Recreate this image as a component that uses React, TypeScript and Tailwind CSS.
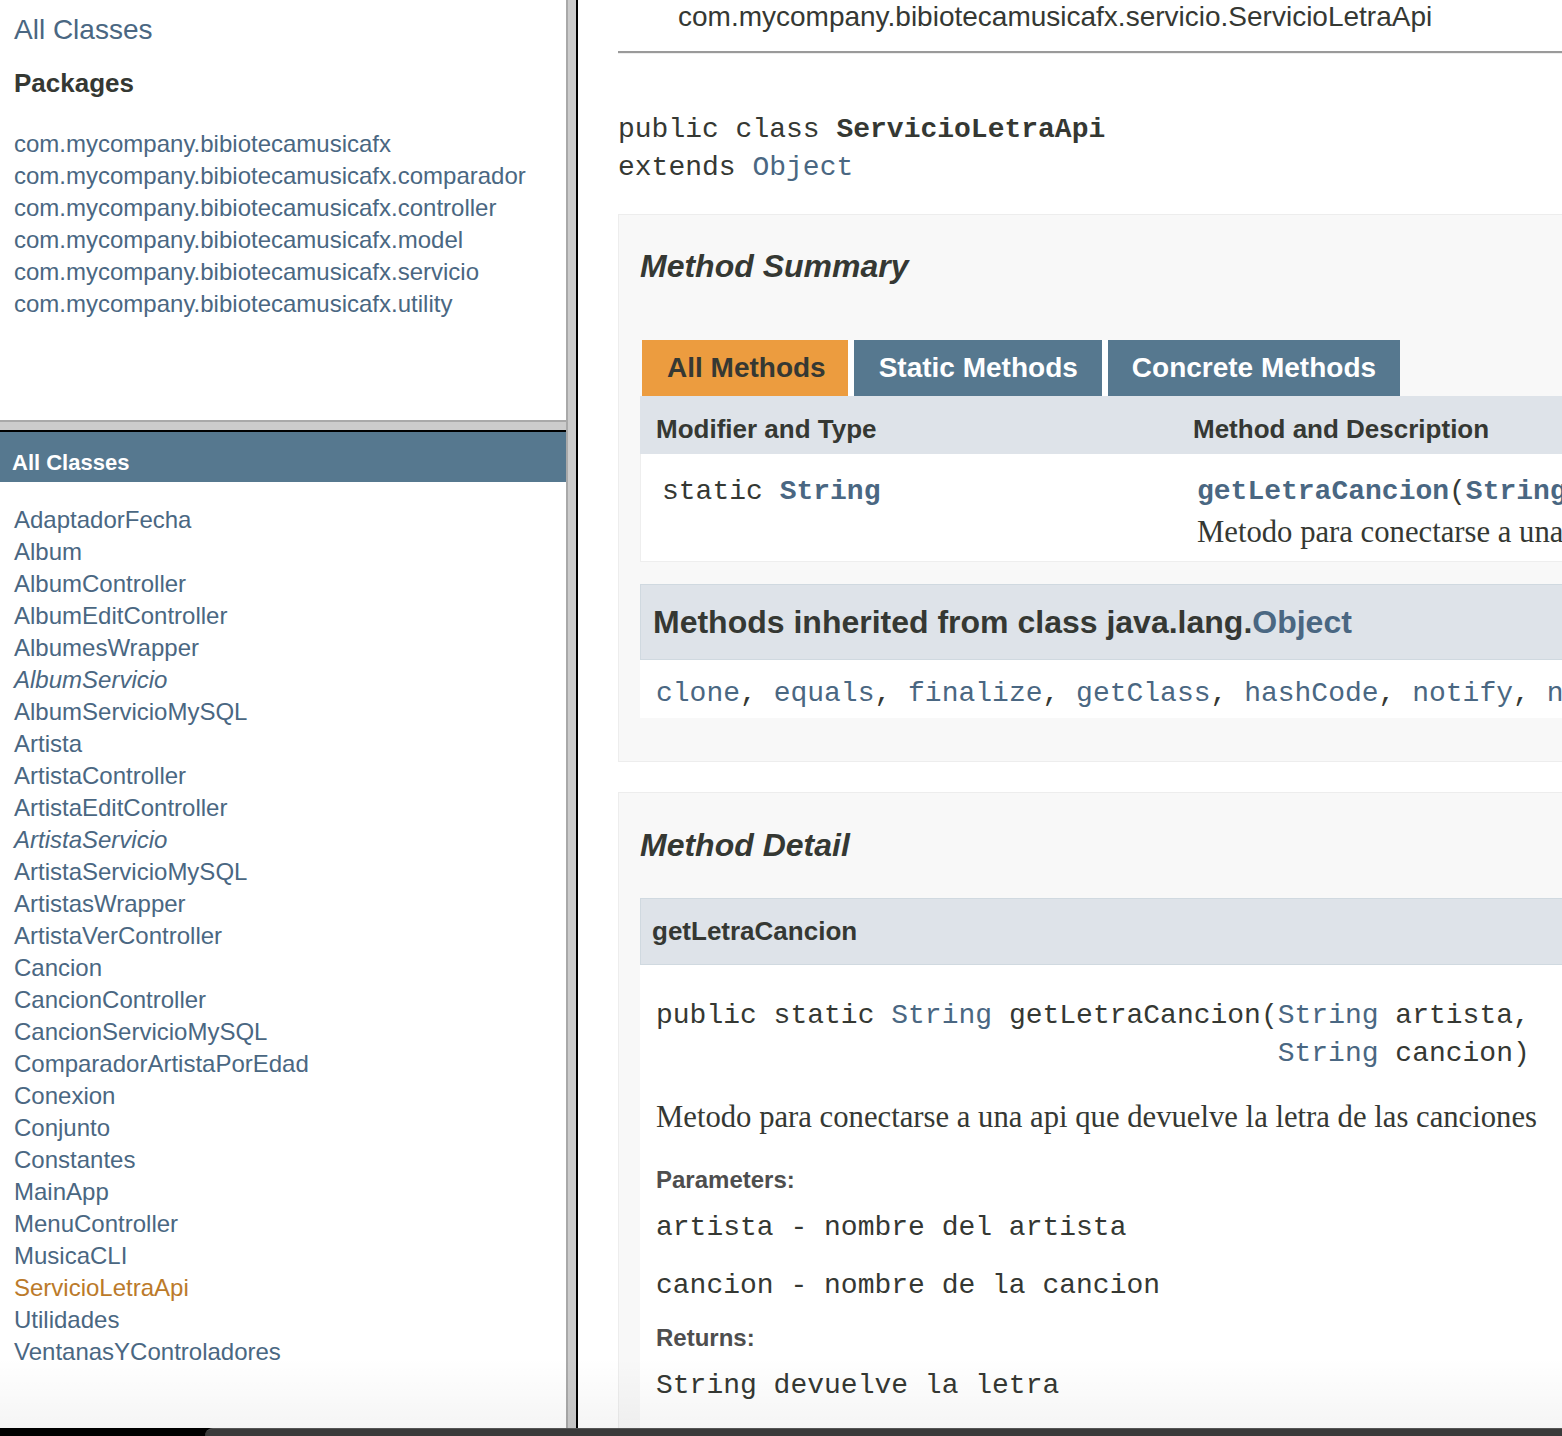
import React from "react";

const packages = [
  "com.mycompany.bibiotecamusicafx",
  "com.mycompany.bibiotecamusicafx.comparador",
  "com.mycompany.bibiotecamusicafx.controller",
  "com.mycompany.bibiotecamusicafx.model",
  "com.mycompany.bibiotecamusicafx.servicio",
  "com.mycompany.bibiotecamusicafx.utility",
];

const classes: { name: string; italic?: boolean; active?: boolean }[] = [
  { name: "AdaptadorFecha" },
  { name: "Album" },
  { name: "AlbumController" },
  { name: "AlbumEditController" },
  { name: "AlbumesWrapper" },
  { name: "AlbumServicio", italic: true },
  { name: "AlbumServicioMySQL" },
  { name: "Artista" },
  { name: "ArtistaController" },
  { name: "ArtistaEditController" },
  { name: "ArtistaServicio", italic: true },
  { name: "ArtistaServicioMySQL" },
  { name: "ArtistasWrapper" },
  { name: "ArtistaVerController" },
  { name: "Cancion" },
  { name: "CancionController" },
  { name: "CancionServicioMySQL" },
  { name: "ComparadorArtistaPorEdad" },
  { name: "Conexion" },
  { name: "Conjunto" },
  { name: "Constantes" },
  { name: "MainApp" },
  { name: "MenuController" },
  { name: "MusicaCLI" },
  { name: "ServicioLetraApi", active: true },
  { name: "Utilidades" },
  { name: "VentanasYControladores" },
];

const L = "text-[#4a6782]";

export default function App() {
  return (
    <div className="relative w-[1562px] h-[1436px] overflow-hidden bg-white font-['Liberation_Sans',Arial,sans-serif] text-[#353833]">
      <div className="flex h-[1428px]">
        {/* Left column */}
        <div className="w-[566px] flex flex-col shrink-0">
          <div className="h-[420px] pl-[14px] pt-[13px] bg-white">
            <div className={`text-[28px] leading-[34px] ${L}`}>All Classes</div>
            <div className="mt-[20px] text-[26px] leading-[32px] font-bold text-[#353833]">Packages</div>
            <ul className="mt-[29px]">
              {packages.map((p) => (
                <li key={p} className={`text-[24px] leading-[32px] ${L}`}>
                  {p}
                </li>
              ))}
            </ul>
          </div>
          <div className="h-[12px] flex flex-col">
            <div className="h-[2px] bg-[#a9a9a9]" />
            <div className="h-[8px] bg-[#cccccc]" />
            <div className="h-[2px] bg-black" />
          </div>
          <div className="flex-1 bg-white">
            <div className="h-[50px] bg-[#56788f] pl-[12px] pt-[17px]">
              <div className="text-[22px] leading-[28px] font-bold text-white">All Classes</div>
            </div>
            <ul className="mt-[22px] pl-[14px]">
              {classes.map((c) => (
                <li
                  key={c.name}
                  className={`text-[24px] leading-[32px] ${c.italic ? "italic" : ""} ${
                    c.active ? "text-[#bb7a2a]" : "text-[#4a6782]"
                  }`}
                >
                  {c.name}
                </li>
              ))}
            </ul>
          </div>
        </div>

        {/* Vertical divider */}
        <div className="w-[12px] flex shrink-0">
          <div className="w-[2px] bg-[#a9a9a9]" />
          <div className="w-[8px] bg-[#cccccc]" />
          <div className="w-[2px] bg-black" />
        </div>

        {/* Right frame */}
        <div className="flex-1 overflow-hidden bg-white">
          <div className="w-[1400px] pl-[40px]">
            <div className="pl-[60px] text-[28px] leading-[34px] text-[#353833] whitespace-nowrap">
              com.mycompany.bibiotecamusicafx.servicio.ServicioLetraApi
            </div>
            <div className="mt-[17px] flex flex-col">
              <div className="h-[2px] bg-[#9a9a9a]" />
              <div className="h-[1px] bg-[#eeeeee]" />
            </div>
            <pre className="mt-[57px] font-['Liberation_Mono',monospace] text-[28px] leading-[38px] text-[#353833]">
              public class <b>ServicioLetraApi</b>
              {"\n"}extends <span className={L}>Object</span>
            </pre>

            {/* Method Summary */}
            <div className="mt-[27px] border border-[#ededed] bg-[#f8f8f8] pl-[21px] pt-[31px] pb-[43px]">
              <h3 className="text-[32px] leading-[40px] font-bold italic text-[#353833]">Method Summary</h3>
              <div className="mt-[54px] ml-[2px] flex h-[56px]">
                <div className="bg-[#ec9c3f] pl-[25px] pr-[22px] flex items-center text-[28px] font-bold text-[#353833]">
                  All Methods
                </div>
                <div className="w-[6px] bg-white" />
                <div className="bg-[#56788f] pl-[25px] pr-[24px] flex items-center text-[28px] font-bold text-white">
                  Static Methods
                </div>
                <div className="w-[6px] bg-white" />
                <div className="bg-[#56788f] pl-[24px] pr-[24px] flex items-center text-[28px] font-bold text-white">
                  Concrete Methods
                </div>
              </div>
              <div className="flex h-[58px] items-center pt-[8px] bg-[#dee3e9] text-[26px] font-bold text-[#353833]">
                <div className="w-[542px] shrink-0 pl-[16px]">Modifier and Type</div>
                <div className="pl-[11px] whitespace-nowrap">Method and Description</div>
              </div>
              <div className="flex h-[108px] bg-white border-l border-b border-[#eeeeee]">
                <div className="w-[542px] shrink-0 pl-[21px] pt-[19px] font-['Liberation_Mono',monospace] text-[28px] leading-[38px]">
                  static <b className={L}>String</b>
                </div>
                <div className="pl-[14px] pt-[19px]">
                  <div className="font-['Liberation_Mono',monospace] text-[28px] leading-[38px] whitespace-nowrap">
                    <b className={L}>getLetraCancion</b>(<b className={L}>String</b>&nbsp;artista, <b className={L}>String</b>&nbsp;cancion)
                  </div>
                  <div className="mt-[2px] font-['Liberation_Serif',serif] text-[30.7px] leading-[38px] whitespace-nowrap">
                    Metodo para conectarse a una api que devuelve la letra de las canciones
                  </div>
                </div>
              </div>

              <div className="mt-[22px] h-[76px] border border-[#d0d9e0] bg-[#dee3e9] pl-[12px] flex items-center text-[32px] font-bold text-[#353833]">
                Methods inherited from class java.lang.<span className={L}>Object</span>
              </div>
              <div className="h-[58px] bg-white pl-[16px] pt-[15px] font-['Liberation_Mono',monospace] text-[28px] leading-[38px] whitespace-nowrap">
                <span className={L}>clone</span>, <span className={L}>equals</span>, <span className={L}>finalize</span>,{" "}
                <span className={L}>getClass</span>, <span className={L}>hashCode</span>, <span className={L}>notify</span>,{" "}
                <span className={L}>notifyAll</span>, <span className={L}>toString</span>, <span className={L}>wait</span>
              </div>
            </div>

            {/* Method Detail */}
            <div className="mt-[30px] border border-[#ededed] bg-[#f8f8f8] pl-[21px] pt-[32px] pb-[40px]">
              <h3 className="text-[32px] leading-[40px] font-bold italic text-[#353833]">Method Detail</h3>
              <div className="mt-[33px] h-[67px] border border-[#d0d9e0] bg-[#dee3e9] pl-[11px] flex items-center text-[26px] font-bold text-[#353833]">
                getLetraCancion
              </div>
              <div className="bg-white pl-[16px] pt-[32px] pb-[40px]">
                <pre className="font-['Liberation_Mono',monospace] text-[28px] leading-[38px] text-[#353833]">
                  public static <span className={L}>String</span> getLetraCancion(<span className={L}>String</span> artista,
                  {"\n"}
                  {"                                     "}
                  <span className={L}>String</span> cancion)
                </pre>
                <div className="mt-[24px] font-['Liberation_Serif',serif] text-[30.7px] leading-[40px] whitespace-nowrap">
                  Metodo para conectarse a una api que devuelve la letra de las canciones
                </div>
                <div className="mt-[28px] text-[24px] leading-[30px] font-bold text-[#4e4e4e]">Parameters:</div>
                <div className="mt-[14px] font-['Liberation_Mono',monospace] text-[28px] leading-[38px] whitespace-pre">
                  artista - nombre del artista
                </div>
                <div className="mt-[20px] font-['Liberation_Mono',monospace] text-[28px] leading-[38px] whitespace-pre">
                  cancion - nombre de la cancion
                </div>
                <div className="mt-[18px] text-[24px] leading-[30px] font-bold text-[#4e4e4e]">Returns:</div>
                <div className="mt-[14px] font-['Liberation_Mono',monospace] text-[28px] leading-[38px] whitespace-pre">
                  String devuelve la letra
                </div>
              </div>
            </div>
          </div>
        </div>
      </div>

      {/* bottom shading overlay */}
      <div className="pointer-events-none absolute left-0 right-0 bottom-[8px] h-[70px] bg-gradient-to-b from-transparent to-black/[0.04]" />

      {/* bottom window edge */}
      <div className="flex h-[8px] bg-black">
        <div className="ml-[205px] flex-1 rounded-tl-[8px] bg-[#3a3a3a] border-t border-[#555]" />
      </div>
    </div>
  );
}
